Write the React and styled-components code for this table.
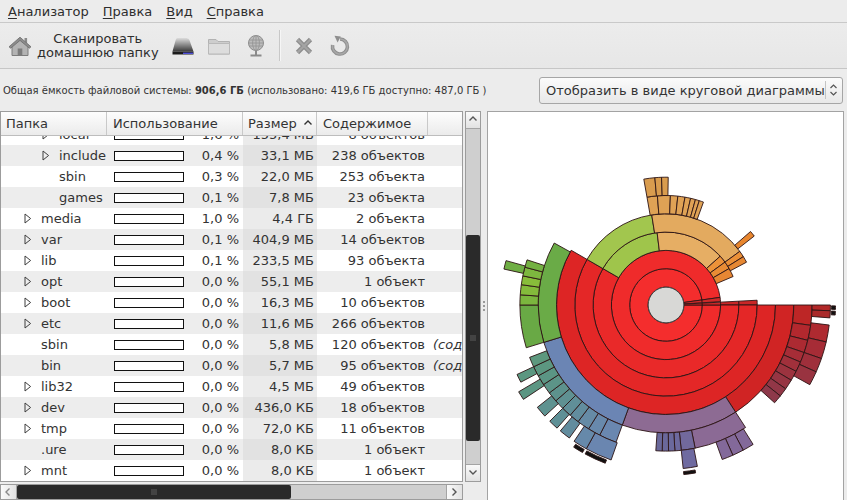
import React from 'react';
import styled, { createGlobalStyle } from 'styled-components';

const Global = createGlobalStyle`
  html, body { margin: 0; padding: 0; background: #ececec; }
  body { font-family: "DejaVu Sans", "Noto Sans", sans-serif; color: #2e2e2e; }
  #root { width: 847px; height: 500px; overflow: hidden; }
`;

const Window = styled.div`
  width: 847px;
  height: 500px;
  display: flex;
  flex-direction: column;
  background: #ececec;
  overflow: hidden;
`;

const MenuBar = styled.div`
  height: 22px;
  display: flex;
  align-items: center;
  padding-left: 1px;
  border-bottom: 1px solid #c9c9c9;
  font-size: 13px;
  background: #ececec;
`;

const MenuItem = styled.span`
  padding: 0 7px;
  color: #2e2e2e;
  u { text-decoration: underline; text-underline-offset: 2px; }
`;

const ToolBar = styled.div`
  height: 45px;
  display: flex;
  align-items: center;
  padding-left: 8px;
  border-bottom: 1px solid #c6c6c6;
  background: linear-gradient(#ececec, #e7e7e7);
`;

const ToolSlot = styled.span`
  display: flex;
  width: 24px;
  height: 24px;
  margin-left: ${p => p.$ml || 0}px;
`;

const ToolLabel = styled.div`
  margin-left: 5px;
  font-size: 13px;
  line-height: 14px;
  text-align: center;
  color: #2e2e2e;
`;

const ToolSep = styled.span`
  width: 1px;
  height: 31px;
  margin-left: 11px;
  background: #c8c8c8;
  box-shadow: 1px 0 0 #f6f6f6;
`;

const InfoRow = styled.div`
  height: 42px;
  display: flex;
  align-items: center;
  justify-content: space-between;
  padding: 0 4px 0 3px;
`;

const InfoText = styled.div`
  font-size: 10px;
  color: #333;
  b { font-weight: bold; }
`;

const Combo = styled.div`
  width: 304px;
  height: 27px;
  box-sizing: border-box;
  border: 1px solid #a6a6a6;
  border-radius: 3px;
  background: linear-gradient(#fbfbfb, #e8e8e8);
  display: flex;
  align-items: center;
  font-size: 13px;
  color: #333;
`;

const ComboText = styled.span`
  flex: 1;
  padding-left: 6px;
  white-space: nowrap;
`;

const ComboSep = styled.span`
  width: 1px;
  height: 18px;
  background: #c4c4c4;
`;

const ComboArrow = styled.span`
  width: 19px;
  display: flex;
  justify-content: center;
`;

const Main = styled.div`
  height: 389px;
  display: flex;
`;

const LeftArea = styled.div`
  width: 481px;
  display: grid;
  grid-template-columns: 463px 16px;
  grid-template-rows: 371px 16px;
  column-gap: 2px;
  row-gap: 2px;
`;

const TreeFrame = styled.div`
  box-sizing: border-box;
  border: 1px solid #9c9c9c;
  background: #fff;
  display: flex;
  flex-direction: column;
  overflow: hidden;
`;

const COLS = '106px 136px 74px 111px 1fr';

const Header = styled.div`
  height: 24px;
  box-sizing: border-box;
  display: grid;
  grid-template-columns: ${COLS};
  border-bottom: 1px solid #bdbdbd;
  background: linear-gradient(#fdfdfd, #ebebeb);
  font-size: 13px;
  color: #333;
`;

const HeadCell = styled.div`
  display: flex;
  align-items: center;
  gap: 6px;
  padding-left: ${p => p.$pl}px;
  border-right: ${p => (p.$last ? 'none' : '1px solid #c9c9c9')};
  white-space: nowrap;
  overflow: hidden;
`;

const Body = styled.div`
  flex: 1;
  overflow: hidden;
`;

const List = styled.div`
  margin-top: -12px;
`;

const Row = styled.div`
  height: 21px;
  display: grid;
  grid-template-columns: ${COLS};
  align-items: center;
  background: ${p => (p.$alt ? '#ededed' : '#ffffff')};
  font-size: 13px;
  color: #333;
`;

const NameCell = styled.div`
  display: flex;
  align-items: center;
  padding-left: ${p => 5 + p.$level * 18}px;
  white-space: nowrap;
  overflow: hidden;
`;

const Expander = styled.span`
  width: 17px;
  flex: none;
  display: flex;
  align-items: center;
`;

const UsageCell = styled.div`
  display: flex;
  align-items: center;
  justify-content: space-between;
  padding: 0 4px 0 7px;
  white-space: nowrap;
`;

const UsageBar = styled.span`
  width: 70px;
  height: 10px;
  box-sizing: border-box;
  border: 1px solid #111;
  background: #fff;
`;

const NumCell = styled.div`
  height: 100%;
  display: flex;
  align-items: center;
  justify-content: flex-end;
  padding-right: 3px;
  white-space: nowrap;
  background: ${p => (p.$shade ? (p.$alt ? '#e2e2e2' : '#ebebeb') : 'transparent')};
`;

const ExtraCell = styled.div`
  padding-left: 5px;
  white-space: nowrap;
  overflow: hidden;
  font-style: italic;
`;

const VScroll = styled.div`
  box-sizing: border-box;
  border: 1px solid #9c9c9c;
  display: flex;
  flex-direction: column;
  background: #cfcfcf;
`;

const HScroll = styled.div`
  box-sizing: border-box;
  border: 1px solid #9c9c9c;
  display: flex;
  background: #cfcfcf;
`;

const ArrowBtn = styled.div`
  flex: none;
  ${p => (p.$h ? 'width: 15px;' : 'height: 16px;')}
  display: flex;
  align-items: center;
  justify-content: center;
  background: linear-gradient(${p => (p.$h ? '90deg, ' : '')}#fafafa, #e2e2e2);
  ${p => p.$side}: 1px solid #a4a4a4;
`;

const Trough = styled.div`
  flex: 1;
  display: flex;
  flex-direction: ${p => (p.$h ? 'row' : 'column')};
  padding: ${p => (p.$h ? `0 ${p.$after}px 0 ${p.$before}px` : `${p.$before}px 0 ${p.$after}px 0`)};
`;

const Thumb = styled.div`
  flex: 1;
  background: #2a2a2a;
  border-radius: 2px;
  display: flex;
  align-items: center;
  justify-content: center;
`;

const Handle = styled.div`
  width: 6px;
  display: flex;
  flex-direction: column;
  align-items: center;
  justify-content: center;
  gap: 2px;
  padding-bottom: 0;
`;

const Dot = styled.span`
  width: 2px;
  height: 2px;
  background: #9a9a9a;
`;

const ChartPanel = styled.div`
  width: 357px;
  height: 392px;
  box-sizing: border-box;
  border: 1px solid #a3a3a3;
  background: #fff;
  overflow: hidden;
  svg { display: block; }
`;

/* ---------- icons ---------- */

const HomeIcon = () => (
  <svg width="24" height="24" viewBox="0 0 24 24">
    <path d="M4 12 V21.5 H20 V12 L12 5.5 Z" fill="#b3b3b3" stroke="#7c7c7c" />
    <rect x="16.5" y="4" width="2.6" height="5" fill="#8a8a8a" />
    <path d="M1 12.8 L12 3.2 L23 12.8 L21.3 14.2 L12 6.4 L2.7 14.2 Z" fill="#8c8c8c" stroke="#6c6c6c" strokeLinejoin="round" strokeWidth="0.8" />
    <rect x="9.7" y="14.5" width="4.6" height="7" fill="#7c7c7c" />
  </svg>
);

const DriveIcon = () => (
  <svg width="24" height="24" viewBox="0 0 24 24">
    <defs>
      <linearGradient id="drvg" x1="0" y1="0" x2="0" y2="1">
        <stop offset="0" stopColor="#dcdcdc" />
        <stop offset="1" stopColor="#3a3a3a" />
      </linearGradient>
    </defs>
    <path d="M6.5 4 H15.5 Q17.8 4 18.6 6.5 L22.5 17.5 H1.5 L4.6 6.2 Q5.2 4 6.5 4 Z" fill="url(#drvg)" />
    <rect x="1.5" y="17.5" width="21" height="3" fill="#1c1c1c" />
    <rect x="12" y="18.6" width="10" height="1.4" fill="#5050d8" />
  </svg>
);

const FolderIcon = () => (
  <svg width="24" height="24" viewBox="0 0 24 24">
    <path d="M1.5 5.5 H9 L11 7.5 H22.5 V20 H1.5 Z" fill="#cdcdcd" stroke="#b2b2b2" />
    <path d="M1.5 9.5 H22.5 V20 H1.5 Z" fill="#dddddd" stroke="#b9b9b9" />
  </svg>
);

const NetIcon = () => (
  <svg width="24" height="24" viewBox="0 0 24 24">
    <circle cx="12" cy="9" r="7.5" fill="#bcbcbc" stroke="#8c8c8c" />
    <ellipse cx="12" cy="9" rx="3.4" ry="7.5" fill="none" stroke="#959595" strokeWidth="0.9" />
    <path d="M12 1.5 V16.5 M5 6 H19 M4.5 9 H19.5 M5 12 H19" stroke="#959595" strokeWidth="0.9" />
    <path d="M12 16.5 V21" stroke="#8a8a8a" strokeWidth="2" />
    <path d="M6.5 21.5 H17.5" stroke="#8a8a8a" strokeWidth="2" />
  </svg>
);

const StopIcon = () => (
  <svg width="24" height="24" viewBox="0 0 24 24">
    <path d="M5.5 5.5 L18.5 18.5 M18.5 5.5 L5.5 18.5" stroke="#8e8e8e" strokeWidth="4.6" />
    <path d="M5.5 5.5 L18.5 18.5 M18.5 5.5 L5.5 18.5" stroke="#a4a4a4" strokeWidth="2.2" />
  </svg>
);

const RefreshIcon = () => (
  <svg width="24" height="24" viewBox="0 0 24 24">
    <path d="M12 5 A7.5 7.5 0 1 1 4.6 11" fill="none" stroke="#8f8f8f" strokeWidth="3.6" />
    <path d="M12 5 A7.5 7.5 0 1 1 4.6 11" fill="none" stroke="#a8a8a8" strokeWidth="1.6" />
    <path d="M6.5 1.8 L12.8 2.4 L9.6 8.6 Z" fill="#8f8f8f" />
  </svg>
);

const Tri = () => (
  <svg width="8" height="11" viewBox="0 0 8 11">
    <path d="M1 1 L6.6 5.5 L1 10 Z" fill="none" stroke="#3e3e3e" strokeWidth="1" strokeLinejoin="round" />
  </svg>
);

const Chevron = ({ dir = 'up', color = '#555' }) => {
  const d = {
    up: 'M1.5 5.5 L5 2 L8.5 5.5',
    down: 'M1.5 2.5 L5 6 L8.5 2.5',
    left: 'M5.5 1.5 L2 5 L5.5 8.5',
    right: 'M2.5 1.5 L6 5 L2.5 8.5',
  }[dir];
  return (
    <svg width="10" height="10" viewBox="0 0 10 10">
      <path d={d} fill="none" stroke={color} strokeWidth="1.4" />
    </svg>
  );
};

const UpDown = () => (
  <svg width="9" height="14" viewBox="0 0 9 14">
    <path d="M1.5 5 L4.5 2 L7.5 5 M1.5 9 L4.5 12 L7.5 9" fill="none" stroke="#555" strokeWidth="1.2" />
  </svg>
);

const Grip = ({ h }) => (
  <svg width={h ? 8 : 8} height={h ? 8 : 8} viewBox="0 0 8 8">
    {h ? (
      <path d="M2 1 V7 M4 1 V7 M6 1 V7" stroke="#6a6a6a" strokeWidth="0.8" />
    ) : (
      <path d="M1 2 H7 M1 4 H7 M1 6 H7" stroke="#6a6a6a" strokeWidth="0.8" />
    )}
  </svg>
);

/* ---------- sunburst ---------- */

const CX = 666;
const CY = 305;
const R = i => 18 + (i - 1) * 18.3;

function arcPath(r0, r1, a0, a1) {
  const rad = d => (d * Math.PI) / 180;
  const p = (r, a) => [(CX + r * Math.cos(rad(a))).toFixed(2), (CY + r * Math.sin(rad(a))).toFixed(2)];
  const large = a1 - a0 > 180 ? 1 : 0;
  const [x0, y0] = p(r1, a0);
  const [x1, y1] = p(r1, a1);
  const [x2, y2] = p(r0, a1);
  const [x3, y3] = p(r0, a0);
  return `M${x0} ${y0} A${r1} ${r1} 0 ${large} 1 ${x1} ${y1} L${x2} ${y2} A${r0} ${r0} 0 ${large} 0 ${x3} ${y3} Z`;
}

const SEGS = [];
const ring = (i, a0, a1, c) => SEGS.push({ r0: R(i), r1: R(i + 1), a0, a1, c });
const radial = (r0, r1, a0, a1, c) => SEGS.push({ r0, r1, a0, a1, c });

// red core
ring(1, 0, 352, '#f42d2d');
ring(2, 0, 352, '#ef2b2b');
ring(1, 352, 356.5, '#d22b2b');
ring(2, 352, 356.5, '#cd2a2a');
[1, 2, 3, 4].forEach(i => ring(i, 357, 360, '#c92727'));
ring(3, 0, 210, '#e92929');
ring(4, 0, 210, '#e42727');
ring(5, 0, 210, '#dd2525');
ring(6, 0, 57, '#d02424');
[
  [0, 8, '#bd2626'], [8, 14, '#b3282e'], [14, 19, '#ac2a32'], [19, 23, '#a62d37'],
  [23, 27, '#a1303b'], [27, 31, '#9c333f'], [31, 35, '#973543'], [35, 38.5, '#923747'], [38.5, 42, '#8e394a'],
].forEach(([a, b, c]) => ring(7, a, b, c));
[
  [0, 2, '#b22828'], [2, 4.5, '#aa2a2a'], [7, 13, '#ae2a30'], [13, 19, '#a62c36'], [19, 24, '#9f2f3b'], [24, 29, '#993340'],
].forEach(([a, b, c]) => ring(8, a, b, c));
radial(165.5, 169.5, 0.3, 1.5, '#111');
radial(165.5, 169.5, 2.1, 3.4, '#111');

// lime + tan (top)
ring(3, 210, 263, '#9fc54b');
ring(4, 210, 261, '#a2c64e');
ring(3, 263, 318, '#e6ae64');
ring(4, 261, 324, '#e3aa5f');
ring(3, 318, 324, '#ec9239');
ring(3, 324, 330, '#e98c35');
ring(3, 330, 337, '#e78733');
ring(4, 324, 328, '#eb9037');
ring(4, 328, 332, '#e68833');
radial(R(5), 112, 319, 322, '#e8862e');
[
  [260, 265.5], [265.5, 272.3], [272.3, 276.2], [276.2, 280], [280, 283], [283, 285.6], [285.6, 287.7], [287.7, 290],
].forEach(([a, b]) => ring(5, a, b, '#dfa255'));
[[260, 265], [265, 268], [268, 271]].forEach(([a, b]) => ring(6, a, b, '#d99c4e'));

// purple (bottom)
ring(6, 57, 110, '#8d6b93');
ring(7, 57, 78.5, '#8b6a95');
[
  [78.5, 84, '#72699c'], [84, 86.5, '#6d699e'], [86.5, 89, '#6b699d'], [89, 91.5, '#6a689b'], [91.5, 94, '#69689a'],
].forEach(([a, b, c]) => ring(7, a, b, c));
[[58, 62], [62, 66], [66, 70]].forEach(([a, b]) => ring(8, a, b, '#83699a'));
ring(8, 79, 84, '#6f6aa0');
radial(167.5, 170.5, 80, 84, '#111');

// blue / teal (bottom-left)
ring(6, 110, 163, '#6b85b4');
[
  [110, 117, '#6a87b0'], [117, 122, '#6889ac'], [122, 127, '#668ba6'], [127, 131, '#628d9e'],
  [131, 135, '#608f98'], [135, 139, '#5f9192'], [139, 143, '#5d928d'], [143, 147, '#5c9488'],
  [147, 151, '#5b9584'], [151, 155, '#5c9781'], [155, 159, '#5d987e'],
].forEach(([a, b, c]) => ring(7, a, b, c));
[
  [109.5, 119, '#6a86b0'], [119, 124, '#6689aa'], [126, 130, '#628c9e'], [131.5, 135, '#5f9096'],
  [137.5, 141.5, '#5e9290'], [152, 155, '#5c9781'],
].forEach(([a, b, c]) => ring(8, a, b, c));
radial(R(8), 171, 146.5, 149.5, '#5c9683');
radial(166, 169.5, 111, 118.5, '#111');
radial(166, 169.5, 119.5, 123, '#111');

// green (left)
ring(6, 163, 209, '#6aab47');
ring(7, 163, 180, '#69a945');
[
  [180, 184, '#7bb63e'], [184, 188, '#84bb3b'], [188, 191.5, '#88bd3a'], [191.5, 195, '#7db73f'], [195, 198, '#74b142'],
].forEach(([a, b, c]) => ring(7, a, b, c));
radial(R(8), 166, 192.5, 195.5, '#6fae44');

const Sunburst = () => (
  <svg width="355" height="390" viewBox="488 112 355 390">
    {SEGS.map((s, i) => (
      <path key={i} d={arcPath(s.r0, s.r1, s.a0, s.a1)} fill={s.c} stroke="#2c1414" strokeWidth="0.9" strokeLinejoin="round" />
    ))}
    <circle cx={CX} cy={CY} r="17.8" fill="#d8d8d6" stroke="#3c3c3c" strokeWidth="0.9" />
  </svg>
);

/* ---------- data ---------- */

const ROWS = [
  { name: 'local', level: 2, exp: true, pct: '1,6 %', size: '155,4 МБ', items: '8 объектов' },
  { name: 'include', level: 2, exp: true, pct: '0,4 %', size: '33,1 МБ', items: '238 объектов' },
  { name: 'sbin', level: 2, pct: '0,3 %', size: '22,0 МБ', items: '253 объекта' },
  { name: 'games', level: 2, pct: '0,1 %', size: '7,8 МБ', items: '23 объекта' },
  { name: 'media', level: 1, exp: true, pct: '1,0 %', size: '4,4 ГБ', items: '2 объекта' },
  { name: 'var', level: 1, exp: true, pct: '0,1 %', size: '404,9 МБ', items: '14 объектов' },
  { name: 'lib', level: 1, exp: true, pct: '0,1 %', size: '233,5 МБ', items: '93 объекта' },
  { name: 'opt', level: 1, exp: true, pct: '0,0 %', size: '55,1 МБ', items: '1 объект' },
  { name: 'boot', level: 1, exp: true, pct: '0,0 %', size: '16,3 МБ', items: '10 объектов' },
  { name: 'etc', level: 1, exp: true, pct: '0,0 %', size: '11,6 МБ', items: '266 объектов' },
  { name: 'sbin', level: 1, pct: '0,0 %', size: '5,8 МБ', items: '120 объектов', extra: '(содержимое недоступно)' },
  { name: 'bin', level: 1, pct: '0,0 %', size: '5,7 МБ', items: '95 объектов', extra: '(содержимое недоступно)' },
  { name: 'lib32', level: 1, exp: true, pct: '0,0 %', size: '4,5 МБ', items: '49 объектов' },
  { name: 'dev', level: 1, exp: true, pct: '0,0 %', size: '436,0 КБ', items: '18 объектов' },
  { name: 'tmp', level: 1, exp: true, pct: '0,0 %', size: '72,0 КБ', items: '11 объектов' },
  { name: '.ure', level: 1, pct: '0,0 %', size: '8,0 КБ', items: '1 объект' },
  { name: 'mnt', level: 1, exp: true, pct: '0,0 %', size: '8,0 КБ', items: '1 объект' },
];

export default function App() {
  return (
    <Window>
      <Global />
      <MenuBar>
        <MenuItem><u>А</u>нализатор</MenuItem>
        <MenuItem><u>П</u>равка</MenuItem>
        <MenuItem><u>В</u>ид</MenuItem>
        <MenuItem><u>С</u>правка</MenuItem>
      </MenuBar>

      <ToolBar>
        <ToolSlot><HomeIcon /></ToolSlot>
        <ToolLabel>Сканировать<br />домашнюю папку</ToolLabel>
        <ToolSlot $ml={12}><DriveIcon /></ToolSlot>
        <ToolSlot $ml={12}><FolderIcon /></ToolSlot>
        <ToolSlot $ml={13}><NetIcon /></ToolSlot>
        <ToolSep />
        <ToolSlot $ml={12}><StopIcon /></ToolSlot>
        <ToolSlot $ml={12}><RefreshIcon /></ToolSlot>
      </ToolBar>

      <InfoRow>
        <InfoText>
          Общая ёмкость файловой системы: <b>906,6 ГБ</b> (использовано: 419,6 ГБ доступно: 487,0 ГБ )
        </InfoText>
        <Combo>
          <ComboText>Отобразить в виде круговой диаграммы</ComboText>
          <ComboSep />
          <ComboArrow><UpDown /></ComboArrow>
        </Combo>
      </InfoRow>

      <Main>
        <LeftArea>
          <TreeFrame>
            <Header>
              <HeadCell $pl={5}>Папка</HeadCell>
              <HeadCell $pl={6}>Использование</HeadCell>
              <HeadCell $pl={5}>Размер <Chevron dir="up" color="#333" /></HeadCell>
              <HeadCell $pl={6}>Содержимое</HeadCell>
              <HeadCell $pl={0} $last />
            </Header>
            <Body>
              <List>
                {ROWS.map((r, i) => {
                  const alt = i % 2 === 1;
                  return (
                    <Row key={i} $alt={alt}>
                      <NameCell $level={r.level}>
                        <Expander>{r.exp && <Tri />}</Expander>
                        {r.name}
                      </NameCell>
                      <UsageCell>
                        <UsageBar />
                        <span>{r.pct}</span>
                      </UsageCell>
                      <NumCell $shade $alt={alt}>{r.size}</NumCell>
                      <NumCell>{r.items}</NumCell>
                      <ExtraCell>{r.extra || ''}</ExtraCell>
                    </Row>
                  );
                })}
              </List>
            </Body>
          </TreeFrame>

          <VScroll>
            <ArrowBtn $side="border-bottom"><Chevron dir="up" /></ArrowBtn>
            <Trough $before={106} $after={23}>
              <Thumb><Grip /></Thumb>
            </Trough>
            <ArrowBtn $side="border-top"><Chevron dir="down" /></ArrowBtn>
          </VScroll>

          <HScroll>
            <ArrowBtn $h $side="border-right"><Chevron dir="left" color="#888" /></ArrowBtn>
            <Trough $h $before={0} $after={155}>
              <Thumb><Grip h /></Thumb>
            </Trough>
            <ArrowBtn $h $side="border-left"><Chevron dir="right" /></ArrowBtn>
          </HScroll>
        </LeftArea>

        <Handle>
          <Dot /><Dot /><Dot />
        </Handle>

        <ChartPanel>
          <Sunburst />
        </ChartPanel>
      </Main>
    </Window>
  );
}
